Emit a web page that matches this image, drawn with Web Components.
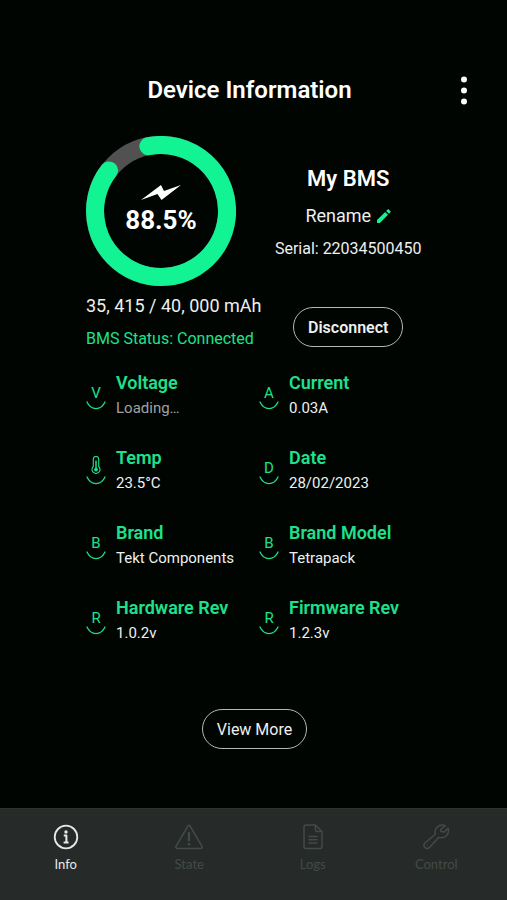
<!DOCTYPE html>
<html lang="en">
<head>
<meta charset="utf-8">
<meta name="viewport" content="width=device-width, initial-scale=1">
<title>Device Information</title>
<style>
  html { height: 100%; }
  body { margin: 0; min-height: 100%; display: flex; flex-direction: column; background: #000501; color: #eef0ef; font-family: Roboto, "Liberation Sans", sans-serif; --accent: #1fe08c; --ring: #12f394; }
</style>
</head>
<body>
<bms-app></bms-app>
<script>
const define = (name, html, setup) => {
  const template = document.createElement('template');
  template.innerHTML = html;
  customElements.define(name, class extends HTMLElement {
    constructor() {
      super();
      this.attachShadow({ mode: 'open' }).append(template.content.cloneNode(true));
    }
    connectedCallback() { if (setup) setup(this, this.shadowRoot); }
  });
};

define('app-header', `
<style>
  :host { display: grid; grid-template-columns: 48px 1fr 56px; align-items: center; padding: 66px 15px 0 15px; }
  h1 { grid-column: 2; margin: 0; text-align: center; font-size: 24px; line-height: 48px; font-weight: 600; color: #fff; }
  button { all: unset; display: grid; place-items: center; height: 48px; cursor: pointer; }
  svg { display: block; }
</style>
<h1><slot></slot></h1>
<button type="button" aria-label="More options">
  <svg width="8" height="30" viewBox="0 0 8 30" fill="#fff"><circle cx="4" cy="4.5" r="3"/><circle cx="4" cy="15.5" r="3"/><circle cx="4" cy="26.5" r="3"/></svg>
</button>`);

define('charge-ring', `
<style>
  :host { display: grid; width: 150px; height: 150px; }
  svg, div { grid-area: 1 / 1; }
  div { display: flex; flex-direction: column; align-items: center; justify-content: center; color: #fff; }
  strong { font-size: 26px; line-height: 36px; font-weight: 700; }
</style>
<svg width="150" height="150" viewBox="0 0 150 150" fill="none" stroke-width="18">
  <circle cx="75" cy="75" r="66" stroke="#515151"/>
  <path d="M62.4 10.2A66 66 0 1 1 23 34.4" stroke="var(--ring)" stroke-linecap="round"/>
</svg>
<div>
  <svg width="42" height="18" viewBox="0 0 42 18" fill="#fff"><path d="M1 16L21 1L24 7L41 1L21.5 16L17.5 10Z"/></svg>
  <strong><slot></slot></strong>
</div>`);

define('pill-button', `
<style>
  :host { display: inline-block; }
  button { display: block; box-sizing: border-box; height: 40px; padding: 0 14px; border: 1px solid #b5b8b6; border-radius: 20px; background: transparent; color: inherit; font: inherit; cursor: pointer; }
</style>
<button type="button"><slot></slot></button>`);

define('bms-summary', `
<style>
  :host { display: grid; grid-template-columns: 173fr 178fr; }
  .charge { display: flex; flex-direction: column; }
  .device { display: flex; flex-direction: column; align-items: center; padding: 28px 2px 0 0; }
  p, h2 { margin: 0; white-space: nowrap; }
  .capacity { font-size: 18px; line-height: 24px; margin-top: 8px; }
  .status { font-size: 16px; line-height: 24px; margin-top: 9px; color: var(--accent); }
  h2 { font-size: 22px; line-height: 30px; font-weight: 600; color: #fff; }
  .rename { all: unset; display: flex; align-items: center; gap: 6px; font-size: 18px; line-height: 24px; margin-top: 10px; cursor: pointer; }
  .serial { font-size: 16px; line-height: 24px; margin-top: 9px; }
  pill-button { margin-top: 46px; font-size: 16px; font-weight: 600; }
</style>
<div class="charge">
  <charge-ring>88.5%</charge-ring>
  <p class="capacity">35, 415 / 40, 000 mAh</p>
  <p class="status">BMS Status: Connected</p>
</div>
<div class="device">
  <h2>My BMS</h2>
  <button class="rename" type="button">Rename
    <svg width="14" height="14" viewBox="1 .5 14.6 14.6" fill="var(--ring)"><path d="M1 12L9.5 3.5L12.5 6.5L4 15H1ZM10.5 2.5L12 1Q12.7.6 13.3 1L15 2.7Q15.4 3.3 15 4L13.5 5.5Z"/></svg>
  </button>
  <p class="serial">Serial: 22034500450</p>
  <pill-button>Disconnect</pill-button>
</div>`);

define('info-item', `
<style>
  :host { display: grid; grid-template-columns: 20px 1fr; column-gap: 10px; align-items: start; }
  .mark { display: grid; grid-template-rows: 31px 9px; justify-items: center; align-items: end; color: var(--accent); font-size: 15px; line-height: 15px; }
  .mark > svg { display: block; }
  dl, dt, dd { margin: 0; white-space: nowrap; }
  dt { font-size: 18px; line-height: 26px; font-weight: 600; color: var(--accent); }
  dd { font-size: 15px; line-height: 24px; }
  :host([pending]) dd { color: #a0a3a1; }
</style>
<div class="mark">
  <slot name="mark"></slot>
  <svg width="20" height="9" viewBox="0 0 20 9" fill="none" stroke="currentColor" stroke-width="1.3" stroke-linecap="round"><path d="M1 1Q4 7.6 10 7.6T19 1"/></svg>
</div>
<dl><dt><slot name="label"></slot></dt><dd><slot></slot></dd></dl>`);

define('info-grid', `
<style>
  :host { display: grid; grid-template-columns: 173fr 178fr; row-gap: 25px; }
  .thermo { display: block; width: 10px; height: 18px; margin-bottom: 2px; }
</style>
<info-item pending><span slot="mark">V</span><span slot="label">Voltage</span>Loading…</info-item>
<info-item><span slot="mark">A</span><span slot="label">Current</span>0.03A</info-item>
<info-item>
  <svg slot="mark" class="thermo" viewBox="0 0 10 18" fill="none" stroke="currentColor"><path d="M2.3 10.5V3.2A2.7 2.7 0 0 1 7.7 3.2V10.5A4 4 0 1 1 2.3 10.5Z" stroke-width="1.1"/><path d="M5 4.5V13" stroke-width="1.5"/><circle cx="5" cy="13.6" r="1.9" fill="currentColor" stroke="none"/></svg>
  <span slot="label">Temp</span>23.5°C</info-item>
<info-item><span slot="mark">D</span><span slot="label">Date</span>28/02/2023</info-item>
<info-item><span slot="mark">B</span><span slot="label">Brand</span>Tekt Components</info-item>
<info-item><span slot="mark">B</span><span slot="label">Brand Model</span>Tetrapack</info-item>
<info-item><span slot="mark">R</span><span slot="label">Hardware Rev</span>1.0.2v</info-item>
<info-item><span slot="mark">R</span><span slot="label">Firmware Rev</span>1.2.3v</info-item>`);

define('nav-item', `
<style>
  :host { display: block; color: #444a47; }
  :host([current]) { color: #e6e9e7; }
  a { display: flex; flex-direction: column; align-items: center; gap: 4px; color: inherit; text-decoration: none; font: 13px/20px Lato, sans-serif; }
</style>
<a href="#"><slot name="icon"></slot><span><slot></slot></span></a>`,
(host, root) => { if (host.hasAttribute('current')) root.querySelector('a').setAttribute('aria-current', 'page'); });

define('tab-bar', `
<style>
  :host { display: block; background: #262b29; }
  nav { display: grid; grid-template-columns: repeat(4, 1fr); padding: 15px 9px 26px 4px; border-top: 1px solid #2c322f; }
  svg { display: block; width: 28px; height: 26px; fill: none; stroke: currentColor; stroke-width: 1.5; stroke-linejoin: round; stroke-linecap: round; }
</style>
<nav aria-label="Main">
  <nav-item current><svg slot="icon" viewBox="0 0 28 26"><circle cx="14" cy="13" r="11.3" stroke-width="1.8"/><circle cx="14" cy="8" r="1.7" fill="currentColor" stroke="none"/><path d="M11.8 11.6H14.4V18.2M11.6 18.4H16.6" stroke-width="2" stroke-linecap="butt"/></svg>Info</nav-item>
  <nav-item><svg slot="icon" viewBox="0 0 28 26"><path d="M13 2Q14 .6 15 2L27 22.3Q27.6 24.2 26 24.5H2Q.4 24.2 1 22.3Z"/><path d="M14 9V16.5" stroke-width="2.2"/><circle cx="14" cy="20.2" r="1.3" fill="currentColor" stroke="none"/></svg>State</nav-item>
  <nav-item><svg slot="icon" viewBox="0 0 28 26"><path d="M16.5 1H7Q5 1 5 3V22.5Q5 24.5 7 24.5H21Q23 24.5 23 22.5V7.5ZM16.5 1V6Q16.5 7.5 18 7.5H23M10 12.5H18M10 15.8H18M10 19H18"/></svg>Logs</nav-item>
  <nav-item><svg slot="icon" viewBox="0 0 28 26"><path d="M23.3 1.7Q18.5-.2 15 3.2Q12.2 6.2 13.3 10.2L3.2 18.7Q.8 21 2.9 23.5Q5.4 25.6 7.7 23.2L16.6 13.4Q21 14.8 24.4 11.8Q27.6 8.5 26.1 4.2L22.2 8.1L19 7.6L18.6 5.5Z"/><circle cx="5.4" cy="21.2" r=".6" fill="currentColor" stroke="none"/></svg>Control</nav-item>
</nav>`);

define('bms-app', `
<style>
  :host { flex: 1; display: flex; flex-direction: column; }
  main { flex: 1; display: flex; flex-direction: column; padding: 22px 70px 0 86px; }
  info-grid { margin-top: 19px; }
  pill-button { align-self: center; margin: 64px 14px 0 0; font-size: 16px; }
</style>
<app-header>Device Information</app-header>
<main>
  <bms-summary></bms-summary>
  <info-grid></info-grid>
  <pill-button>View More</pill-button>
</main>
<tab-bar></tab-bar>`);
</script>
</body>
</html>
